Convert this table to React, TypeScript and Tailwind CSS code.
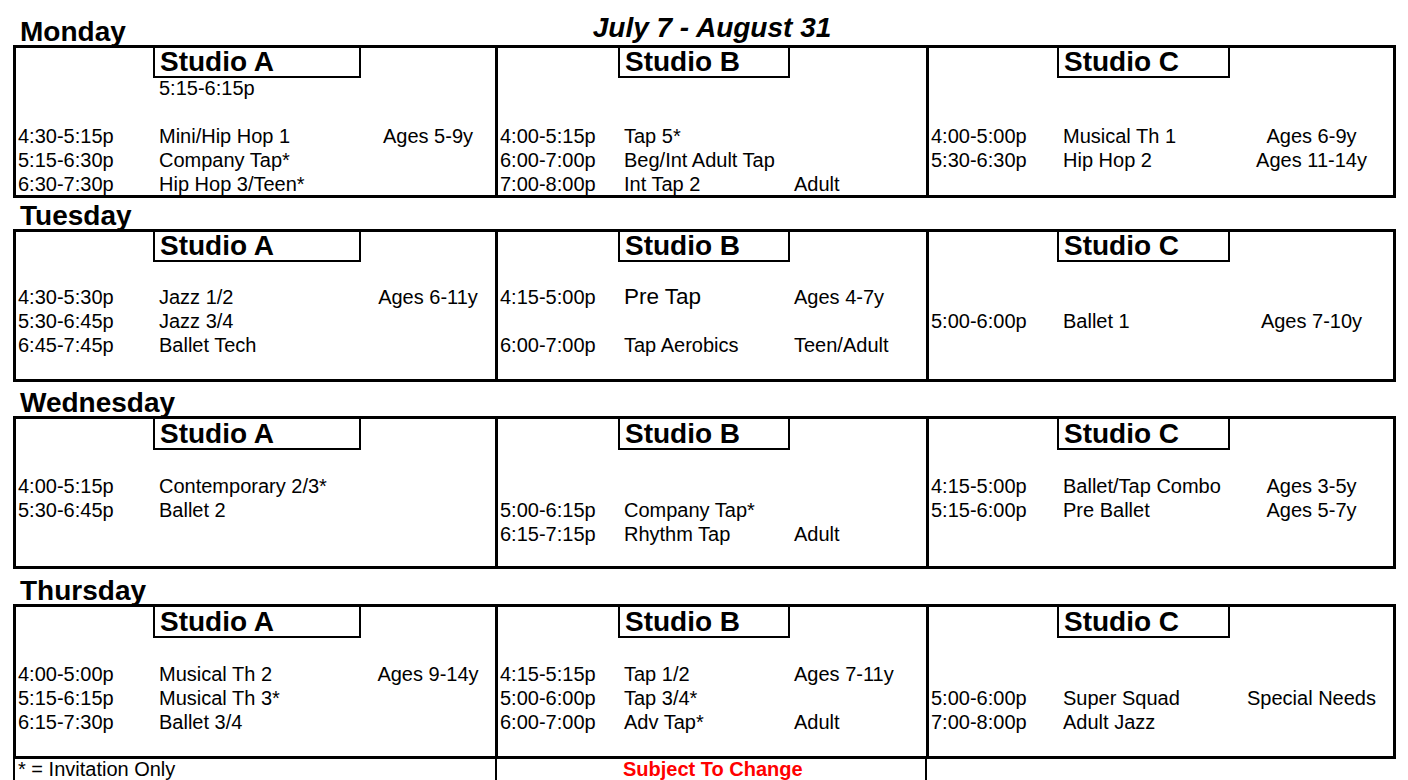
import React from 'react';

type Cell = { t?: string; c?: string; a?: string; big?: boolean } | null;

interface Day {
  name: string;
  head: string;
  hdr: string;
  rows: string[];
  studios: Cell[][];
}

const STUDIOS = ['Studio A', 'Studio B', 'Studio C'];

// column widths follow the spreadsheet: time / class / ages
const COLS = [
  { wrap: 'w-[479px]', grid: 'grid-cols-[137px_208px_134px]', age: 'text-center' },
  { wrap: 'w-[431px] border-l-[3px] border-black', grid: 'grid-cols-[120px_172px_136px]', age: 'pl-1' },
  { wrap: 'w-[467px] border-l-[3px] border-black', grid: 'grid-cols-[128px_173px_163px]', age: 'text-center' },
];

const DAYS: Day[] = [
  {
    name: 'Monday',
    head: 'h-[45px]',
    hdr: 'h-[28px]',
    rows: ['h-[24px]', 'h-[24px]', 'h-[24px]', 'h-[24px]', 'h-[23px]'],
    studios: [
      [
        { c: '5:15-6:15p' },
        null,
        { t: '4:30-5:15p', c: 'Mini/Hip Hop 1', a: 'Ages 5-9y' },
        { t: '5:15-6:30p', c: 'Company Tap*' },
        { t: '6:30-7:30p', c: 'Hip Hop 3/Teen*' },
      ],
      [
        null,
        null,
        { t: '4:00-5:15p', c: 'Tap 5*' },
        { t: '6:00-7:00p', c: 'Beg/Int Adult Tap' },
        { t: '7:00-8:00p', c: 'Int Tap 2', a: 'Adult' },
      ],
      [
        null,
        null,
        { t: '4:00-5:00p', c: 'Musical Th 1', a: 'Ages 6-9y' },
        { t: '5:30-6:30p', c: 'Hip Hop 2', a: 'Ages 11-14y' },
        null,
      ],
    ],
  },
  {
    name: 'Tuesday',
    head: 'h-[31px]',
    hdr: 'h-[29px]',
    rows: ['h-[24px]', 'h-[24px]', 'h-[24px]', 'h-[24px]', 'h-[22px]'],
    studios: [
      [
        null,
        { t: '4:30-5:30p', c: 'Jazz 1/2', a: 'Ages 6-11y' },
        { t: '5:30-6:45p', c: 'Jazz 3/4' },
        { t: '6:45-7:45p', c: 'Ballet Tech' },
        null,
      ],
      [
        null,
        { t: '4:15-5:00p', c: 'Pre Tap', a: 'Ages 4-7y', big: true },
        null,
        { t: '6:00-7:00p', c: 'Tap Aerobics', a: 'Teen/Adult' },
        null,
      ],
      [null, null, { t: '5:00-6:00p', c: 'Ballet 1', a: 'Ages 7-10y' }, null, null],
    ],
  },
  {
    name: 'Wednesday',
    head: 'h-[34px]',
    hdr: 'h-[31px]',
    rows: ['h-[24px]', 'h-[24px]', 'h-[24px]', 'h-[24px]', 'h-[20px]'],
    studios: [
      [
        null,
        { t: '4:00-5:15p', c: 'Contemporary 2/3*' },
        { t: '5:30-6:45p', c: 'Ballet 2' },
        null,
        null,
      ],
      [
        null,
        null,
        { t: '5:00-6:15p', c: 'Company Tap*' },
        { t: '6:15-7:15p', c: 'Rhythm Tap', a: 'Adult' },
        null,
      ],
      [
        null,
        { t: '4:15-5:00p', c: 'Ballet/Tap Combo', a: 'Ages 3-5y' },
        { t: '5:15-6:00p', c: 'Pre Ballet', a: 'Ages 5-7y' },
        null,
        null,
      ],
    ],
  },
  {
    name: 'Thursday',
    head: 'h-[35px]',
    hdr: 'h-[31px]',
    rows: ['h-[24px]', 'h-[24px]', 'h-[24px]', 'h-[24px]', 'h-[22px]'],
    studios: [
      [
        null,
        { t: '4:00-5:00p', c: 'Musical Th 2', a: 'Ages 9-14y' },
        { t: '5:15-6:15p', c: 'Musical Th 3*' },
        { t: '6:15-7:30p', c: 'Ballet 3/4' },
        null,
      ],
      [
        null,
        { t: '4:15-5:15p', c: 'Tap 1/2', a: 'Ages 7-11y' },
        { t: '5:00-6:00p', c: 'Tap 3/4*' },
        { t: '6:00-7:00p', c: 'Adv Tap*', a: 'Adult' },
        null,
      ],
      [
        null,
        null,
        { t: '5:00-6:00p', c: 'Super Squad', a: 'Special Needs' },
        { t: '7:00-8:00p', c: 'Adult Jazz' },
        null,
      ],
    ],
  },
];

function StudioColumn({ day, idx }: { day: Day; idx: number }) {
  const col = COLS[idx];
  return (
    <div className={`flex flex-col ${col.wrap}`}>
      <div className={`grid ${col.grid} ${day.hdr}`}>
        <div />
        <div className="flex items-center border-x-2 border-b-2 border-black pl-[5px] text-[28px] font-bold leading-none">
          {STUDIOS[idx]}
        </div>
        <div />
      </div>
      {day.rows.map((h, r) => {
        const cell = day.studios[idx][r];
        return (
          <div key={r} className={`grid ${col.grid} ${h} text-[20px] leading-[24px] whitespace-nowrap`}>
            <div className="pl-[2px]">{cell?.t}</div>
            <div className={`pl-[6px] ${cell?.big ? 'text-[22.5px]' : ''}`}>{cell?.c}</div>
            <div className={col.age}>{cell?.a}</div>
          </div>
        );
      })}
    </div>
  );
}

export default function App() {
  return (
    <div
      className="w-[1408px] h-[780px] overflow-hidden bg-white pl-[13px] text-black"
      style={{ fontFamily: '"Liberation Sans", Arial, sans-serif' }}
    >
      {DAYS.map((day, i) => (
        <section key={day.name}>
          <div className={`flex items-end ${day.head}`}>
            <div className="w-[482px] pl-[7px] text-[28px] font-bold leading-[27px]">{day.name}</div>
            {i === 0 && (
              <div className="w-[434px] pb-[4px] text-center text-[28px] font-bold italic leading-[27px]">
                July 7 - August 31
              </div>
            )}
          </div>
          <div className="flex w-[1383px] border-[3px] border-black">
            {STUDIOS.map((_, idx) => (
              <StudioColumn key={idx} day={day} idx={idx} />
            ))}
          </div>
        </section>
      ))}

      {/* footer notes */}
      <div className="flex h-[21px] text-[20px] leading-[21px] whitespace-nowrap">
        <div className="w-[482px] border-l-2 border-black pl-[3px]">* = Invitation Only</div>
        <div className="w-[430px] border-l-2 border-black pl-[126px] font-bold text-[#ff0000]">
          Subject To Change
        </div>
        <div className="border-l-2 border-black" />
      </div>
    </div>
  );
}
